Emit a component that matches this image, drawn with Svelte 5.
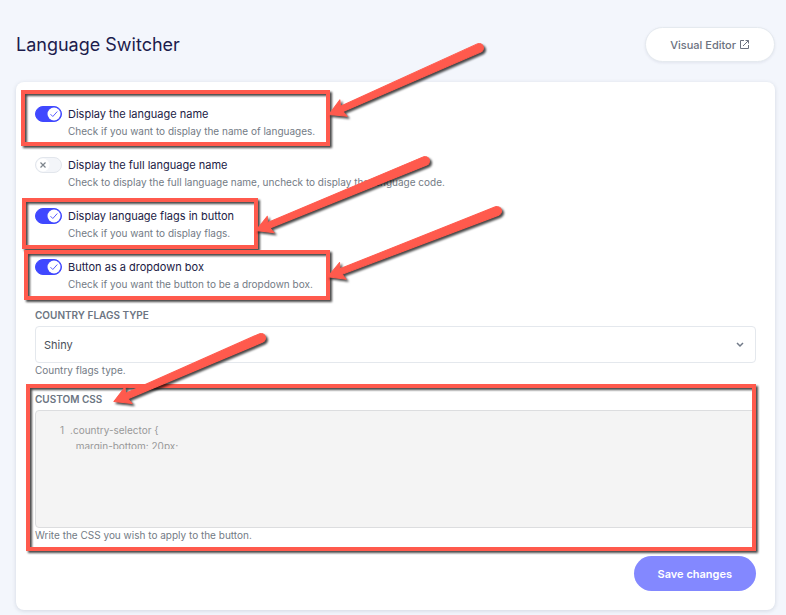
<script>
  let options = $state([
    { id: 'name', label: 'Display the language name', help: 'Check if you want to display the name of languages.', on: true },
    { id: 'full', label: 'Display the full language name', help: 'Check to display the full language name, uncheck to display the language code.', on: false },
    { id: 'flags', label: 'Display language flags in button', help: 'Check if you want to display flags.', on: true },
    { id: 'dropdown', label: 'Button as a dropdown box', help: 'Check if you want the button to be a dropdown box.', on: true }
  ]);
  let flagType = $state('Shiny');
  let css = $state('.country-selector {\n  margin-bottom: 20px;\n}');

  const boxes = [
    { x: 23, y: 92, w: 305, h: 52 },
    { x: 24, y: 200, w: 232, h: 47 },
    { x: 26, y: 252, w: 302, h: 46 },
    { x: 28, y: 386, w: 726, h: 163 }
  ];

  const arrows = [
    { tip: [328, 115], tail: [479, 48] },
    { tip: [255, 231], tail: [425, 161] },
    { tip: [327, 277], tail: [497, 211] },
    { tip: [113, 402], tail: [261, 338] }
  ].map(({ tip, tail }) => {
    const dx = tail[0] - tip[0];
    const dy = tail[1] - tip[1];
    const len = Math.hypot(dx, dy);
    return {
      d: `M1 0 L17 -9 L15 -3 L${len} -4.5 A4.5 4.5 0 0 1 ${len} 4.5 L15 3 L17 9 Z`,
      place: `translate(${tip[0]} ${tip[1]}) rotate(${(Math.atan2(dy, dx) * 180) / Math.PI})`
    };
  });
</script>

<main>
  <header>
    <h1>Language Switcher</h1>
    <button type="button" class="pill editor">
      Visual Editor
      <svg width="11" height="11" viewBox="0 0 11 11" fill="none" stroke="currentColor" aria-hidden="true">
        <path d="M5 1.5H1.5v8h8V6M6.5 1.5h3v3M9.5 1.5L4 7" />
      </svg>
    </button>
  </header>

  <form class="card" onsubmit={(e) => e.preventDefault()}>
    <div class="options">
      {#each options as option (option.id)}
        <div class="option">
          <span class="switch">
            <input type="checkbox" id={option.id} bind:checked={option.on} aria-describedby="{option.id}-help" />
            <svg class:on={option.on} width="14" height="14" viewBox="0 0 14 14" fill="none" aria-hidden="true">
              <circle cx="7" cy="7" r="6.5" fill="#fff" />
              {#if option.on}
                <path d="M3.5 7.2L5.8 9.5L10.3 4.5" stroke="#5a5cff" />
              {:else}
                <path d="M4.5 4.5l5 5M9.5 4.5l-5 5" stroke="#7d848c" stroke-width="1.2" />
              {/if}
            </svg>
          </span>
          <label for={option.id}>{option.label}</label>
          <p class="help" id="{option.id}-help">{option.help}</p>
        </div>
      {/each}
    </div>

    <div class="field">
      <label class="caption" for="flag-type">COUNTRY FLAGS TYPE</label>
      <div class="select">
        <select id="flag-type" bind:value={flagType}>
          <option>Shiny</option>
          <option>Rectangle</option>
          <option>Circle</option>
        </select>
        <svg width="8" height="6" viewBox="0 0 8 6" fill="none" stroke="#717a88" stroke-width="1.5" aria-hidden="true">
          <path d="M1 1l3 3l3 -3" />
        </svg>
      </div>
      <p class="help">Country flags type.</p>
    </div>

    <div class="field">
      <label class="caption" for="custom-css">CUSTOM CSS</label>
      <div class="code">
        <span class="line">1</span>
        <textarea id="custom-css" spellcheck="false" bind:value={css}></textarea>
      </div>
      <p class="help">Write the CSS you wish to apply to the button.</p>
    </div>

    <button type="submit" class="pill save">Save changes</button>
  </form>

  <svg class="marks" width="786" height="615" viewBox="0 0 786 615" aria-hidden="true">
    {#each boxes as box}
      <rect class="shadowed" x={box.x} y={box.y} width={box.w} height={box.h} />
    {/each}
    {#each arrows as arrow}
      <g class="shadowed"><path d={arrow.d} transform={arrow.place} /></g>
    {/each}
  </svg>
</main>

<style>
  :global(body) {
    margin: 0;
    background: #f3f6fc;
  }

  main {
    position: relative;
    box-sizing: border-box;
    min-height: 100vh;
    padding: 27px 11px 5px 16px;
    font-family: Inter, 'Liberation Sans', sans-serif;
    font-size: 11px;
    color: #212145;
    overflow: hidden;
  }

  header {
    display: flex;
    align-items: center;
    justify-content: space-between;
    margin-bottom: 20px;
  }

  h1 {
    margin: 0;
    font-size: 18px;
    font-weight: 400;
    line-height: 24px;
    color: #1c1c4c;
  }

  .pill {
    display: flex;
    align-items: center;
    justify-content: center;
    gap: 3px;
    box-sizing: border-box;
    height: 35px;
    padding: 0 24px;
    border: 0;
    border-radius: 18px;
    font: 500 11px/16px Inter, 'Liberation Sans', sans-serif;
  }

  .editor {
    border: 1px solid #e5eaef;
    background: #fff;
    color: #6c7280;
    box-shadow: 0 1px 3px #1c1c4c14;
  }

  .card {
    display: flex;
    flex-direction: column;
    padding: 23px 19px 19px;
    border-radius: 8px;
    background: #fff;
    box-shadow: 0 1px 4px #1c2c4c26;
  }

  .options {
    display: flex;
    flex-direction: column;
    gap: 16px;
    margin-bottom: 14px;
  }

  .option {
    display: grid;
    grid-template-columns: 27px 1fr;
    column-gap: 6px;
    line-height: 18px;
  }

  .option .help {
    grid-column: 2;
    line-height: 17px;
  }

  .switch {
    display: grid;
    align-items: center;
  }

  .switch > * {
    grid-area: 1 / 1;
  }

  .switch input {
    appearance: none;
    box-sizing: border-box;
    width: 27px;
    height: 16px;
    margin: 0;
    border: 1px solid #e2e6ec;
    border-radius: 8px;
    background: #f3f5f9;
  }

  .switch input:checked {
    border-color: #4048ff;
    background: #4048ff;
  }

  .switch svg {
    margin-left: 1px;
    pointer-events: none;
  }

  .switch svg.on {
    margin-left: 12px;
  }

  .help {
    margin: 0;
    font-size: 10px;
    line-height: 14px;
    color: #737b85;
  }

  .field {
    display: flex;
    flex-direction: column;
    margin-bottom: 14px;
  }

  .caption {
    margin-bottom: 3px;
    font-size: 10px;
    font-weight: 600;
    line-height: 16px;
    color: #6c7582;
  }

  .select {
    display: grid;
    align-items: center;
  }

  .select > * {
    grid-area: 1 / 1;
  }

  .select svg {
    justify-self: end;
    margin-right: 12px;
    pointer-events: none;
  }

  select {
    appearance: none;
    width: 100%;
    height: 37px;
    padding: 0 8px;
    border: 1px solid #e4e8ed;
    border-radius: 4px;
    background: #fff;
    color: #4a5058;
    font: 11px/16px Inter, 'Liberation Sans', sans-serif;
  }

  .code {
    display: flex;
    align-items: flex-start;
    gap: 6px;
    box-sizing: border-box;
    height: 118px;
    padding: 11px 24px;
    border: 1px solid #dcdddf;
    border-radius: 4px;
    background: #f4f4f4;
    color: #999;
    font-size: 10px;
    line-height: 16px;
  }

  textarea {
    flex: 1;
    height: 27px;
    padding: 0;
    border: 0;
    background: none;
    color: inherit;
    font: inherit;
    resize: none;
    overflow: hidden;
  }

  .save {
    align-self: flex-end;
    background: #8388ff;
    color: #fff;
    font-weight: 600;
  }

  .marks {
    position: absolute;
    top: 0;
    left: 0;
    pointer-events: none;
  }

  .marks rect {
    fill: none;
    stroke: #ff5a4d;
    stroke-width: 4;
  }

  .marks path {
    fill: #ff5a4d;
    stroke: #ff5a4d;
    stroke-width: 1;
    stroke-linejoin: round;
  }

  .shadowed {
    filter: drop-shadow(2px 2px 1px #000000b8);
  }
</style>
